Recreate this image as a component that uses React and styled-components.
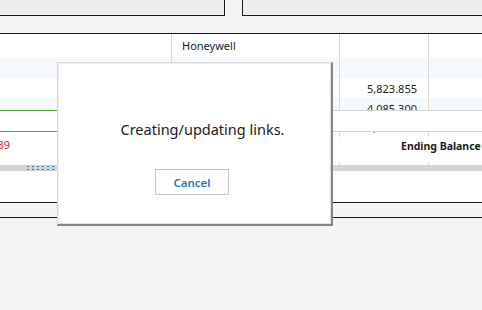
import React from "react";
import styled, { createGlobalStyle } from "styled-components";

const GlobalStyle = createGlobalStyle`
    html, body {
        margin: 0;
        padding: 0;
        background: #f4f4f4;
    }
    body {
        font-family: "Segoe UI", "Noto Sans", "Open Sans", sans-serif;
    }
`

const Page = styled.div`
    position: relative;
    width: 482px;
    height: 310px;
    overflow: hidden;
    background: #f4f4f4;
`

const TopBar = styled.div`
    display: flex;
    justify-content: space-between;
    height: 16px;
`

const Panel = styled.div`
    box-sizing: border-box;
    width: ${props => props.w}px;
    background: #eeeeee;
    border-bottom: 1px solid #1a1a1a;
    ${props => props.side === "left" ? "border-right: 1px solid #1a1a1a;" : "border-left: 1px solid #1a1a1a;"}
`

const Grid = styled.div`
    margin-top: 17px;
    background: #fff;
    border-top: 1px solid #1a1a1a;
    font-size: 11px;
    color: #1a1a1a;
`

const Row = styled.div`
    display: grid;
    grid-template-columns: 171px 168px 89px 1fr;
    height: ${props => props.h}px;
    background: ${props => props.alt ? "#f5f9fd" : "#fff"};
    overflow: hidden;
`

const Cell = styled.div`
    box-sizing: border-box;
    display: flex;
    align-items: ${props => props.top ? "flex-start" : "center"};
    justify-content: ${props => props.right ? "flex-end" : "flex-start"};
    padding: ${props => props.pad || "0"};
    border-left: ${props => props.line ? "1px solid #dadada" : "none"};
    white-space: nowrap;
    line-height: ${props => props.lh || "normal"};
    font-weight: ${props => props.bold ? 700 : 400};
    font-size: ${props => props.bold ? "10.5px" : "inherit"};
    color: ${props => props.red ? "#f0142c" : "inherit"};
    grid-column: ${props => props.span || "auto"};
    min-width: 0;
`

const Clip = styled.div`
    width: 10px;
    overflow: hidden;
    display: flex;
    justify-content: flex-end;
`

const ScrollBar = styled.div`
    position: relative;
    height: 6px;
    background: #d4d4d4;
`

const Grip = styled.div`
    position: absolute;
    left: 27px;
    top: 0;
    width: 30px;
    height: 6px;
    background-image: radial-gradient(circle at 1px 1.5px, #2a7fd0 0.8px, transparent 1px);
    background-size: 5px 3px;
`

const Blank = styled.div`
    height: 31px;
    background: #fff;
`

const Footer = styled.div`
    height: 14px;
    border-top: 1px solid #1a1a1a;
    border-bottom: 1px solid #1a1a1a;
    background: #f4f4f4;
`

const Band = styled.div`
    position: absolute;
    left: 0;
    right: 0;
    top: 110px;
    display: grid;
    grid-template-columns: 171px 1fr;
    height: 22px;
`

const BandPart = styled.div`
    box-sizing: border-box;
    background: #fff;
    border-top: 1px solid ${props => props.green ? "#4ea52a" : "#d4d4d4"};
    border-bottom: 1px solid ${props => props.green ? "#4ea52a" : "#d4d4d4"};
`

const Dialog = styled.div`
    position: absolute;
    left: 57px;
    top: 62px;
    box-sizing: border-box;
    width: 276px;
    height: 164px;
    background: #fff;
    border-top: 1px solid #d6d6d6;
    border-left: 1px solid #d6d6d6;
    border-right: 2px solid #858585;
    border-bottom: 2px solid #858585;
    box-shadow: inset 1px 1px 0 #efefef, inset -1px -1px 0 #e2e2e2;
    display: flex;
    flex-direction: column;
    align-items: center;
`

const Message = styled.div`
    margin-top: 56px;
    padding-left: 16px;
    font-size: 14.5px;
    line-height: 20px;
    color: #1b1b1b;
`

const Button = styled.button`
    box-sizing: border-box;
    margin-top: 30px;
    margin-right: 5px;
    width: 74px;
    height: 26px;
    background: #fff;
    border: 1px solid #c2c2c2;
    color: #1e78c8;
    font-family: inherit;
    font-size: 11.5px;
    font-weight: 600;
    padding: 0;
`

const App = () => (
    <Page>
        <GlobalStyle />
        <TopBar>
            <Panel side="left" w={225} />
            <Panel side="right" w={240} />
        </TopBar>
        <Grid>
            <Row h={23}>
                <Cell />
                <Cell line pad="0 0 0 10px">Honeywell</Cell>
                <Cell line />
                <Cell line />
            </Row>
            <Row h={21} alt>
                <Cell />
                <Cell line />
                <Cell line />
                <Cell line />
            </Row>
            <Row h={20}>
                <Cell />
                <Cell line />
                <Cell line right pad="0 11px 0 0">5,823.855</Cell>
                <Cell line />
            </Row>
            <Row h={20} alt>
                <Cell />
                <Cell line />
                <Cell line right pad="0 11px 0 0">4,085.300</Cell>
                <Cell line />
            </Row>
            <Row h={19}>
                <Cell />
                <Cell line />
                <Cell line right pad="0 11px 0 0">5,823.855</Cell>
                <Cell line />
            </Row>
            <Row h={25}>
                <Cell top red lh="16px">
                    <Clip>1,238.239</Clip>
                </Cell>
                <Cell />
                <Cell top bold span="3 / span 2" pad="0 0 0 62px" lh="18px">Ending Balance</Cell>
            </Row>
            <Row h={3}>
                <Cell />
                <Cell line />
                <Cell line />
                <Cell line />
            </Row>
            <ScrollBar>
                <Grip />
            </ScrollBar>
            <Blank />
        </Grid>
        <Footer />
        <Band>
            <BandPart green />
            <BandPart />
        </Band>
        <Dialog>
            <Message>Creating/updating links.</Message>
            <Button>Cancel</Button>
        </Dialog>
    </Page>
);

export default App;
